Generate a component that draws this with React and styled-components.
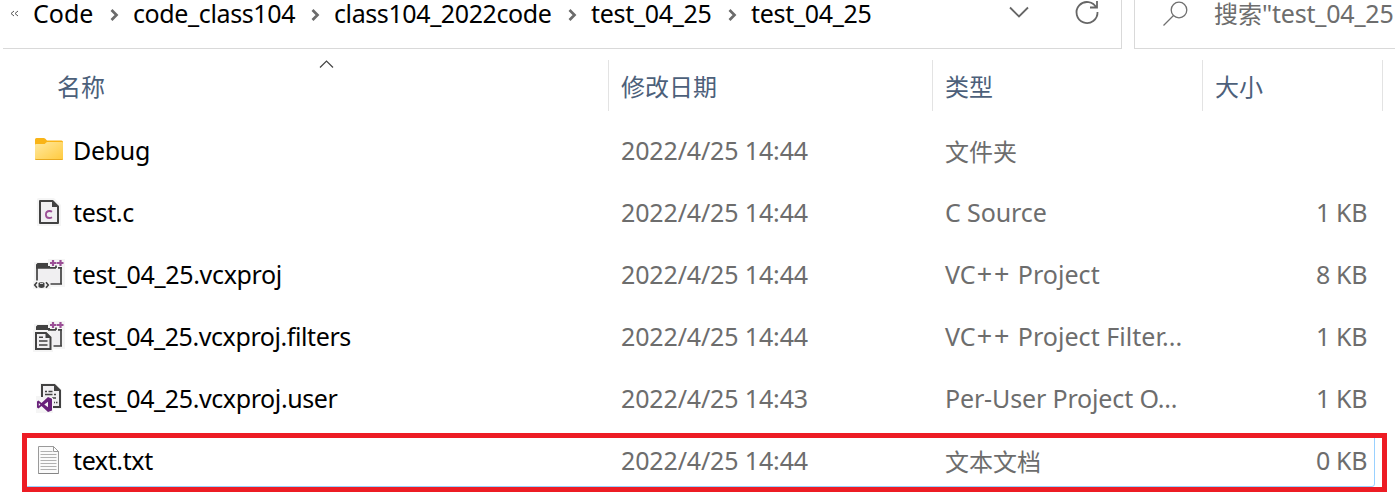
import React from "react";
import styled, { createGlobalStyle } from "styled-components";

const GlobalStyle = createGlobalStyle`
  * {
    box-sizing: border-box;
  }

  body {
    margin: 0;
    overflow: hidden;
    background: #ffffff;
    font-family: "Noto Sans", "Noto Sans CJK SC", sans-serif;
    font-size: 25px;
    line-height: 34px;
  }
`;

const Explorer = styled.div`
  width: 1395px;
  height: 501px;
  overflow: hidden;
  background: #ffffff;
`;

const TopBar = styled.div`
  display: flex;
  gap: 12px;
  height: 49px;
  padding-left: 3px;
  line-height: 26px;
`;

const AddressBar = styled.div`
  display: flex;
  width: 1119px;
  padding-left: 7px;
  border-right: 1px solid #d9d9d9;
  border-bottom: 1px solid #d9d9d9;
`;

const SearchBox = styled.div`
  display: flex;
  flex: 1;
  padding-left: 27px;
  border-left: 1px solid #d9d9d9;
  border-bottom: 1px solid #d9d9d9;
  overflow: hidden;
`;

const SearchText = styled.span`
  margin-left: 26px;
  color: #6d6d6d;
  white-space: nowrap;
  letter-spacing: -0.2px;
`;

const Cjk = styled.span`
  font-size: 24px;
  letter-spacing: 0;
`;

const Crumbs = styled.div`
  display: flex;
  width: 976px;
`;

const Crumb = styled.span`
  width: ${(props) => props.$width}px;
  color: #000000;
  white-space: nowrap;
  letter-spacing: ${(props) => props.$tracking || 0}px;
`;

const Icon = styled.svg`
  display: block;
  flex: none;
  overflow: visible;
`;

const CrumbArrow = styled(Icon)`
  margin: 9px 15px 0 17px;
`;

const Overflow = styled(Icon)`
  margin: 10px 14px 0 0;
`;

const Refresh = styled(Icon)`
  margin-left: 46px;
`;

const Expand = styled(Icon)`
  margin-top: 6px;
`;

const columns = "608px 324px 270px 181px";

const Header = styled.div`
  display: grid;
  grid-template-columns: ${columns};
  height: 51px;
  margin-top: 11px;
`;

const HeaderCell = styled.div`
  position: relative;
  display: flex;
  align-items: center;
  padding-left: ${(props) => props.$indent || 12}px;
  padding-top: 2px;
  border-left: ${(props) => (props.$first ? "none" : "1px solid #e3e3e3")};
  border-right: ${(props) => (props.$last ? "1px solid #e3e3e3" : "none")};
  color: #4c607a;
  font-size: 24px;
`;

const SortMark = styled(Icon)`
  position: absolute;
  top: 0;
  left: 319px;
`;

const FileList = styled.div`
  margin-top: 9px;
`;

const Row = styled.div`
  position: relative;
  display: grid;
  grid-template-columns: ${columns};
  align-items: center;
  height: 62px;
`;

const NameCell = styled.div`
  display: flex;
  align-items: center;
  gap: 8px;
  padding-left: 33px;
`;

const Label = styled.span`
  display: block;
  padding: ${(props) => (props.$cjk ? "2px 0 0" : "0 0 2px")};
  color: ${(props) => (props.$dark ? "#000000" : "#6d6d6d")};
  font-size: ${(props) => (props.$cjk ? 24 : 25)}px;
  letter-spacing: ${(props) => props.$tracking || 0}px;
  white-space: nowrap;
`;

const Plus = styled.span`
  margin-left: 1px;
  font-size: 27px;
  line-height: 1;
  letter-spacing: 1.8px;
`;

const Cell = styled.div`
  padding-left: 13px;
  padding-right: 16px;
  text-align: ${(props) => (props.$right ? "right" : "left")};
`;

const FocusLine = styled.div`
  position: absolute;
  top: 4px;
  left: 22px;
  width: 1353px;
  height: 53px;
  border: 1px solid #99d1ff;
  border-radius: 3px;
`;

const Highlight = styled.div`
  position: absolute;
  top: 3px;
  left: 22px;
  width: 1365px;
  height: 59px;
  border: 5px solid #ed1c24;
`;

const FolderIcon = () => (
  <Icon width="32" height="32" viewBox="0 0 32 32">
    <defs>
      <linearGradient id="folder" x1="0" y1="0" x2="1" y2="1">
        <stop offset="0" stopColor="#ffe9a0" />
        <stop offset="1" stopColor="#ffca3d" />
      </linearGradient>
    </defs>
    <path d="M2 4.500Q2 3 3.500 3h7.200q.800 0 1.400.600L14 5.500h14.500Q30 5.500 30 7v4H2z" fill="#f9b417" />
    <path d="M2 10q0-1 1-1h8q.700 0 1.200-.500L13.500 7.300q.400-.300 1-.300H29q1 0 1 1v16q0 1-1 1H3q-1 0-1-1z" fill="url(#folder)" />
    <path d="M2 23.500q0 1.500 1.500 1.500h25Q30 25 30 23.500q-.500.600-1.500.600h-25q-1 0-1.500-.600z" fill="#e8a91f" />
  </Icon>
);

const CIcon = () => (
  <Icon width="32" height="32" viewBox="0 0 32 32">
    <path d="M5 1h16l7 7v21H4V2z" fill="#f5f5f5" />
    <path d="M7 4h12.500L25 9.500V26H7z" fill="#f0eff1" stroke="#424242" strokeWidth="2" strokeLinejoin="round" />
    <path d="M19 3.500V10h6.500z" fill="#424242" />
    <path d="M19 14.700q-1-.7-2.500-.7c-2.300 0-3.600 1.500-3.600 3.700 0 2.100 1.300 3.300 3.400 3.300q1.600 0 2.700-.7" fill="none" stroke="#9b4f96" strokeWidth="1.800" />
  </Icon>
);

const PlusPlus = () => (
  <path d="M17 4h6.500M20 1v6M24 4h6.500M27.500 1v6" stroke="#9b4f96" strokeWidth="2.200" />
);

const ProjectIcon = () => (
  <Icon width="32" height="32" viewBox="0 0 32 32">
    <path d="M1 3h14V0h17v28H18v2H0v-8h1z" fill="#f5f5f5" />
    <path d="M4 9h24v16H4z" fill="#f0eff1" />
    <path d="M3 5.500 4.500 4H15v3h2v2H3z" fill="#424242" />
    <path d="M4 8v13.500M3 8.800h20M23 6.500V9M25 8.800h4M28 8v17.500M17.500 25H29" stroke="#424242" strokeWidth="1.700" fill="none" />
    <path d="M0 22h16v8H0z" fill="#f5f5f5" />
    <path d="M4 23.200 1.700 26 4 28.800M13 23.200l2.300 2.800-2.300 2.800" fill="none" stroke="#424242" strokeWidth="1.600" />
    <path d="M5.500 24q3-2 6 0v4q-3 2-6 0z" fill="#424242" />
    <path d="M7 24.300h3" stroke="#f5f5f5" />
    <PlusPlus />
  </Icon>
);

const FiltersIcon = () => (
  <Icon width="32" height="32" viewBox="0 0 32 32">
    <path d="M1 3h14V0h17v28H20v3H0V9h1z" fill="#f5f5f5" />
    <path d="M18 9h10v16h-9z" fill="#f0eff1" />
    <path d="M3 5.500 4.500 4H15v3h2v2H3z" fill="#424242" />
    <path d="M15 8.800h8M23 6.500V9M25 8.800h4M28 8v17.500M20.500 25H29" stroke="#424242" strokeWidth="1.700" fill="none" />
    <path d="M3 12h10l4.500 4.500V28H3z" fill="#f0eff1" stroke="#424242" strokeWidth="2" />
    <path d="M12.500 11.500V17h5.500z" fill="#424242" />
    <path d="M6 16.200h4M6 20h8.500M6 24h8.500" stroke="#424242" strokeWidth="1.600" />
    <PlusPlus />
  </Icon>
);

const UserIcon = () => (
  <Icon width="32" height="32" viewBox="0 0 32 32">
    <path d="M7 0h15l7 7v19h-9v4H3V13h4z" fill="#f5f5f5" />
    <path d="M9 14V2h12.500L27 7.500V24h-7" fill="#f0eff1" stroke="#424242" strokeWidth="2" />
    <path d="M21 1.500V8h6.500z" fill="#424242" />
    <path d="M12 8.500h2M15.500 8.500h4M12 11.500h7.500M21 11.500h2M15 15h2M19 15h4M21 19.500h1M23 19.500h1.500" stroke="#424242" strokeWidth="1.300" />
    <path d="M3 17 6 16l3 2 6-5 5 2v13l-5 2-6-5-3 2-3-1z" fill="#f5f5f5" />
    <path d="m15 14 4 1.700v11.700L15 29l-6.500-6-3 2.400L4 24.600v-6.200l1.500-.8 3 2.400zm0 4.800-3.700 2.700 3.700 2.800zM5.800 20v3l1.600-1.500z" fill="#68217a" fillRule="evenodd" />
  </Icon>
);

const TextIcon = () => (
  <Icon width="32" height="32" viewBox="0 0 32 32">
    <path d="M5.500 1.500h15l5 5v22h-20z" fill="#fafafa" stroke="#9a9a9a" />
    <path d="M20.500 1.500v5h5z" fill="#ffffff" stroke="#9a9a9a" />
    <path d="M5.500 28.500h20" stroke="#858585" />
    <path d="M7.500 6.500h12M7.500 9.500h16M7.500 12.500h16M7.500 15.500h16M7.500 18.500h16M7.500 21.500h16M7.500 24.500h16" stroke="#b0b0b0" />
  </Icon>
);

const crumbs = [
  { text: "Code", width: 61 },
  { text: "code_class104", width: 162, tracking: -0.38 },
  { text: "class104_2022code", width: 218, tracking: -0.4 },
  { text: "test_04_25", width: 121, tracking: -0.3 },
  { text: "test_04_25", width: 121, tracking: -0.3 },
];

const files = [
  { icon: <FolderIcon />, name: "Debug", tracking: -0.3, date: "2022/4/25 14:44", type: "文件夹", cjk: true },
  { icon: <CIcon />, name: "test.c", tracking: -0.3, date: "2022/4/25 14:44", type: "C Source", typeTracking: -0.1, size: "1 KB" },
  {
    icon: <ProjectIcon />,
    name: "test_04_25.vcxproj",
    tracking: -0.33,
    date: "2022/4/25 14:44",
    type: <>VC<Plus>++</Plus> Project</>,
    typeTracking: 0.05,
    size: "8 KB",
  },
  {
    icon: <FiltersIcon />,
    name: "test_04_25.vcxproj.filters",
    tracking: -0.41,
    date: "2022/4/25 14:44",
    type: <>VC<Plus>++</Plus> Project Filter...</>,
    typeTracking: 0.05,
    size: "1 KB",
  },
  {
    icon: <UserIcon />,
    name: "test_04_25.vcxproj.user",
    tracking: -0.39,
    date: "2022/4/25 14:43",
    type: "Per-User Project O...",
    typeTracking: -0.15,
    size: "1 KB",
  },
  { icon: <TextIcon />, name: "text.txt", tracking: -0.38, date: "2022/4/25 14:44", type: "文本文档", cjk: true, size: "0 KB", selected: true },
];

const App = () => {
  return (
    <Explorer>
      <GlobalStyle />
      <TopBar>
        <AddressBar>
          <Overflow width="9" height="8" viewBox="0 0 9 8">
            <path d="M4 1 1 3.500 4 6M8 1 5 3.500 8 6" fill="none" stroke="#555555" />
          </Overflow>
          <Crumbs>
            {crumbs.map((crumb, index) => (
              <React.Fragment key={index}>
                {index > 0 && (
                  <CrumbArrow width="7" height="12" viewBox="0 0 7 12">
                    <path d="m0.500 1 5 5-5 5" fill="none" stroke="#6b6b6b" strokeWidth="2.700" />
                  </CrumbArrow>
                )}
                <Crumb $width={crumb.width} $tracking={crumb.tracking}>
                  {crumb.text}
                </Crumb>
              </React.Fragment>
            ))}
          </Crumbs>
          <Expand width="20" height="12" viewBox="0 0 20 12">
            <path d="m1 1.500 9 9 9-9" fill="none" stroke="#666666" strokeWidth="1.800" />
          </Expand>
          <Refresh width="24" height="24" viewBox="0 0 24 24">
            <path d="M21.500 8A10.500 10.500 0 1 0 22.500 12M22 1v6.500h-7" fill="none" stroke="#666666" strokeWidth="1.800" />
          </Refresh>
        </AddressBar>
        <SearchBox>
          <Icon width="26" height="28" viewBox="0 0 26 28">
            <circle cx="17" cy="10" r="7.800" fill="none" stroke="#707070" strokeWidth="1.300" />
            <path d="M11.500 15.500 1.500 25.500" stroke="#707070" strokeWidth="1.300" />
          </Icon>
          <SearchText>
            <Cjk>搜索</Cjk>"test_04_25
          </SearchText>
        </SearchBox>
      </TopBar>
      <Header>
        <HeaderCell $first $indent={57}>
          名称
          <SortMark width="15" height="9" viewBox="0 0 15 9">
            <path d="m1 7.500 6.500-6.500L14 7.500" fill="none" stroke="#444444" strokeWidth="1.200" />
          </SortMark>
        </HeaderCell>
        <HeaderCell>修改日期</HeaderCell>
        <HeaderCell>类型</HeaderCell>
        <HeaderCell $last>大小</HeaderCell>
      </Header>
      <FileList>
        {files.map((file) => (
          <Row key={file.name}>
            <NameCell>
              {file.icon}
              <Label $dark $tracking={file.tracking}>
                {file.name}
              </Label>
            </NameCell>
            <Cell>
              <Label $tracking={-0.14}>{file.date}</Label>
            </Cell>
            <Cell>
              <Label $cjk={file.cjk} $tracking={file.typeTracking}>
                {file.type}
              </Label>
            </Cell>
            <Cell $right>
              <Label $tracking={-0.4}>{file.size}</Label>
            </Cell>
            {file.selected && (
              <>
                <FocusLine />
                <Highlight />
              </>
            )}
          </Row>
        ))}
      </FileList>
    </Explorer>
  );
};

export default App;
